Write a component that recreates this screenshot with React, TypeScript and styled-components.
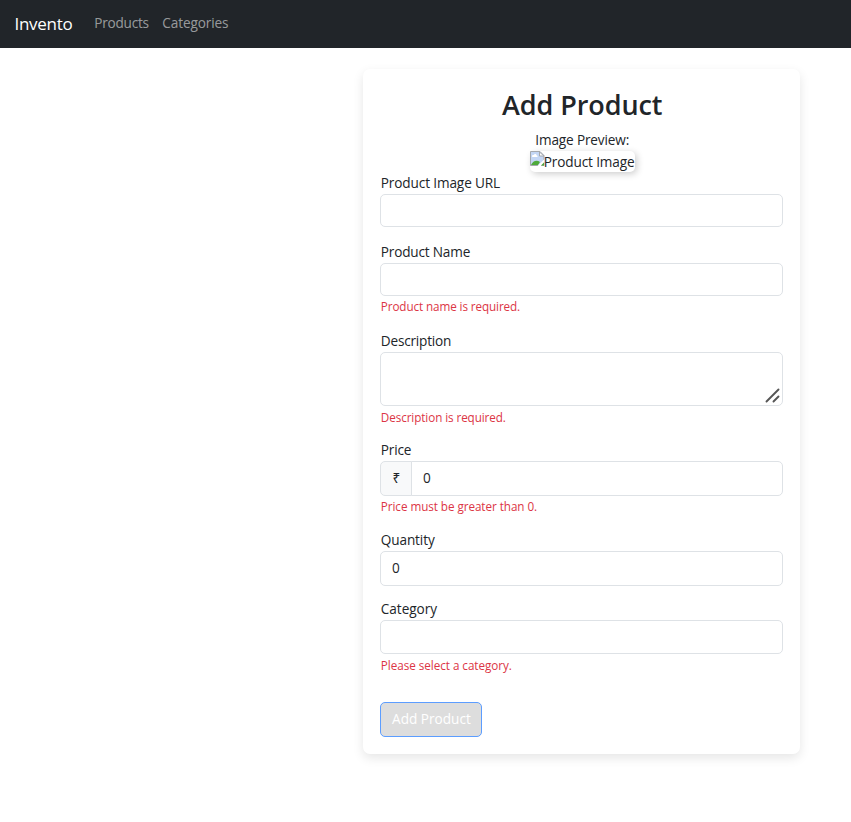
import React from "react";
import styled, { createGlobalStyle } from "styled-components";

const GlobalStyle = createGlobalStyle`
  *, *::before, *::after { box-sizing: border-box; }
  body {
    margin: 0;
    background: #fff;
    color: #212529;
    font-family: "Open Sans", "Noto Sans", sans-serif;
    font-size: 13.6px;
    line-height: 21px;
  }
  input, textarea, button { font: inherit; color: inherit; }
`;

type Tracked = { $track?: number };

const Navbar = styled.nav`
  display: flex;
  align-items: center;
  height: 48px;
  padding: 0 14.5px 1px;
  background: #212529;
`;

const Brand = styled.a`
  margin-right: 22px;
  color: #fff;
  font-size: 17px;
  letter-spacing: -0.3px;
`;

const NavLink = styled.a<Tracked>`
  margin-right: 13.5px;
  padding-bottom: 2px;
  color: rgba(255, 255, 255, 0.55);
  letter-spacing: ${(p) => p.$track ?? 0}px;
`;

const Page = styled.main`
  display: flex;
  justify-content: flex-end;
  align-items: flex-start;
  min-height: 774px;
  padding: 21px 51px 0 0;
`;

const Card = styled.form`
  width: 436.6px;
  height: 684.5px;
  padding: 18px 17px 0;
  border-radius: 7px;
  background: #fff;
  box-shadow: 0 4px 11px rgba(0, 0, 0, 0.1);
`;

const Title = styled.h1`
  height: 36px;
  margin: 0 0 6px;
  padding-left: 1px;
  font-size: 27px;
  font-weight: 600;
  line-height: 36px;
  letter-spacing: -0.08px;
  text-align: center;
`;

const Preview = styled.div`
  display: flex;
  flex-direction: column;
  align-items: center;
  height: 43px;
  padding-left: 1px;
`;

const PreviewCaption = styled.span`
  height: 22px;
  letter-spacing: -0.15px;
`;

const BrokenImage = styled.div`
  display: flex;
  width: 105px;
  height: 22px;
  border-radius: 5px;
  letter-spacing: -0.12px;
  white-space: nowrap;
  box-shadow: 2px 2px 7px rgba(0, 0, 0, 0.2);

  svg { flex: none; margin-right: -1px; }
`;

const Field = styled.div<{ $gap: number }>`
  display: flex;
  flex-direction: column;
  margin-bottom: ${(p) => p.$gap}px;
`;

const Label = styled.label<Tracked>`
  height: 22px;
  padding-left: 0.4px;
  letter-spacing: ${(p) => p.$track ?? 0}px;
`;

const Input = styled.input<{ $height?: number }>`
  width: 100%;
  height: ${(p) => p.$height ?? 33}px;
  padding: 0 10.5px 1px;
  border: 1px solid #dee2e6;
  border-radius: 5px;
  background: #fff;
  outline: none;
`;

const AreaFrame = styled.div`
  position: relative;
  height: 54px;
`;

const Area = styled.textarea`
  display: block;
  width: 100%;
  height: 100%;
  padding: 5px 11px;
  border: 1px solid #dee2e6;
  border-radius: 5px;
  resize: none;
  outline: none;
`;

const Grip = styled.svg`
  position: absolute;
  right: 3px;
  bottom: 3px;
  pointer-events: none;
`;

const PriceGroup = styled.div`
  display: flex;
  height: 35px;

  ${Input} {
    flex: 1;
    padding-bottom: 2px;
    border-radius: 0 5px 5px 0;
  }
`;

const Currency = styled.span`
  display: flex;
  align-items: center;
  justify-content: center;
  width: 32px;
  margin-right: -1px;
  padding-bottom: 2px;
  border: 1px solid #dee2e6;
  border-radius: 5px 0 0 5px;
  background: #f8f9fa;
`;

const ErrorText = styled.small<Tracked & { $line?: number }>`
  height: 20px;
  padding-left: 0.4px;
  color: #dc3545;
  font-size: 11.7px;
  line-height: ${(p) => p.$line ?? 21}px;
  letter-spacing: ${(p) => p.$track ?? 0}px;
`;

const Submit = styled.button`
  display: block;
  width: 102px;
  height: 35px;
  padding: 0 0 2px;
  appearance: none;
  border: 1px solid #5c9dff;
  border-radius: 5px;
  background: #ddd;
  color: #fff;
`;

function BrokenIcon() {
  return (
    <svg width="15" height="16" viewBox="0 0 15 16">
      <path d="M.5.5H10L14 4.5V14.5H.5Z" fill="#c3d6f5" stroke="#a5a8ad" />
      <path d="M2 5.5C2 4 3 3.8 3.7 4C4.5 2.5 6.5 3 6.7 4.5C8 4.5 8 6 7 6H2.5Z" fill="#fff" />
      <path d="M1 14C3 9.5 7 8.5 10 11L8 14Z" fill="#4faa3b" />
      <path d="M9.5 1V5H14Z" fill="#fff" stroke="#a5a8ad" />
      <path d="M7 15.5L14.5 8V11L10.5 15.5Z" fill="#fff" />
      <path d="M11 14.5H14V11.5Z" fill="#4faa3b" />
    </svg>
  );
}

export default function App() {
  return (
    <>
      <GlobalStyle />
      <Navbar>
        <Brand>Invento</Brand>
        <NavLink $track={-0.25}>Products</NavLink>
        <NavLink $track={-0.1}>Categories</NavLink>
      </Navbar>
      <Page>
        <Card>
          <Title>Add Product</Title>
          <Preview>
            <PreviewCaption>Image Preview:</PreviewCaption>
            <BrokenImage>
              <BrokenIcon />
              Product Image
            </BrokenImage>
          </Preview>
          <Field $gap={14}>
            <Label htmlFor="url" $track={-0.12}>Product Image URL</Label>
            <Input id="url" />
          </Field>
          <Field $gap={14}>
            <Label htmlFor="name" $track={-0.18}>Product Name</Label>
            <Input id="name" />
            <ErrorText $track={-0.1}>Product name is required.</ErrorText>
          </Field>
          <Field $gap={13}>
            <Label htmlFor="description" $track={-0.2}>Description</Label>
            <AreaFrame>
              <Area id="description" />
              <Grip width="15" height="15" viewBox="0 0 15 15">
                <path d="M1.5 13.5L13.5 1.5M8.5 13.5L13.5 8.5" stroke="#555" strokeWidth="1.9" strokeLinecap="round" />
              </Grip>
            </AreaFrame>
            <ErrorText $track={-0.09} $line={23}>Description is required.</ErrorText>
          </Field>
          <Field $gap={13}>
            <Label htmlFor="price" $track={-0.15}>Price</Label>
            <PriceGroup>
              <Currency>₹</Currency>
              <Input id="price" $height={35} defaultValue="0" />
            </PriceGroup>
            <ErrorText $track={-0.06}>Price must be greater than 0.</ErrorText>
          </Field>
          <Field $gap={12}>
            <Label htmlFor="quantity" $track={-0.12}>Quantity</Label>
            <Input id="quantity" $height={34.5} defaultValue="0" />
          </Field>
          <Field $gap={28}>
            <Label htmlFor="category" $track={-0.04}>Category</Label>
            <Input id="category" $height={34.5} />
            <ErrorText $track={-0.04} $line={23}>Please select a category.</ErrorText>
          </Field>
          <Submit type="button">Add Product</Submit>
        </Card>
      </Page>
    </>
  );
}
